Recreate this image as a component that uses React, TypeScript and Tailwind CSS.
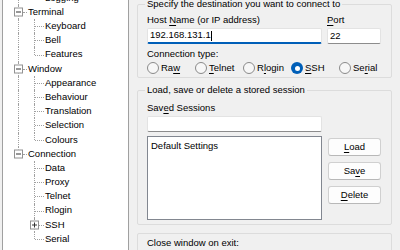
import React from 'react';

type TreeRow = {
  label: string;
  level: 0 | 1;
  box?: '-' | '+';
  last?: boolean;
  parentLast?: boolean;
};

const rows: TreeRow[] = [
  { label: 'Logging', level: 1, last: true },
  { label: 'Terminal', level: 0, box: '-' },
  { label: 'Keyboard', level: 1 },
  { label: 'Bell', level: 1 },
  { label: 'Features', level: 1, last: true },
  { label: 'Window', level: 0, box: '-' },
  { label: 'Appearance', level: 1 },
  { label: 'Behaviour', level: 1 },
  { label: 'Translation', level: 1 },
  { label: 'Selection', level: 1 },
  { label: 'Colours', level: 1, last: true },
  { label: 'Connection', level: 0, box: '-', last: true },
  { label: 'Data', level: 1, parentLast: true },
  { label: 'Proxy', level: 1, parentLast: true },
  { label: 'Telnet', level: 1, parentLast: true },
  { label: 'Rlogin', level: 1, parentLast: true },
  { label: 'SSH', level: 1, box: '+', parentLast: true },
  { label: 'Serial', level: 1, last: true, parentLast: true },
];

// text with one underlined access key, marked by '&'
const Accel = ({ text }: { text: string }) => {
  const i = text.indexOf('&');
  if (i < 0) return <>{text}</>;
  return (
    <>
      {text.slice(0, i)}
      <u className="underline-offset-[1.5px]">{text[i + 1]}</u>
      {text.slice(i + 2)}
    </>
  );
};

const ExpandBox = ({ sign, left }: { sign: '-' | '+'; left: string }) => (
  <span
    className={`absolute top-1/2 -translate-y-1/2 ${left} w-[9px] h-[9px] border border-[#929292] bg-white flex items-center justify-center`}
  >
    <span className="w-[5px] h-px bg-[#333]" />
    {sign === '+' && <span className="absolute w-px h-[5px] bg-[#333]" />}
  </span>
);

const Tree = () => (
  <div className="w-[127px] shrink-0 h-full bg-white border-l border-r border-[#a0a0a0] overflow-hidden">
    <div className="-mt-[9.3px]">
      {rows.map((r) => (
        <div
          key={r.label}
          className={`relative h-[14.2px] flex items-center whitespace-nowrap ${r.level === 0 ? 'pl-[25px]' : 'pl-[42px]'}`}
        >
          {/* top level trunk */}
          {(r.level === 1 ? !r.parentLast : true) && (
            <span
              className={`absolute left-[15px] top-0 border-l border-dotted border-[#a0a0a0] ${r.level === 0 && r.last ? 'h-1/2' : 'h-full'}`}
            />
          )}
          {r.level === 0 && (
            <>
              <span className="absolute left-[20px] top-1/2 w-[4px] border-t border-dotted border-[#a0a0a0]" />
              <ExpandBox sign={r.box ?? '-'} left="left-[11px]" />
            </>
          )}
          {r.level === 1 && (
            <>
              <span
                className={`absolute left-[31px] top-0 border-l border-dotted border-[#a0a0a0] ${r.last ? 'h-1/2' : 'h-full'}`}
              />
              <span className="absolute left-[32px] top-1/2 w-[9px] border-t border-dotted border-[#a0a0a0]" />
              {r.box && <ExpandBox sign={r.box} left="left-[27px]" />}
            </>
          )}
          <span className="relative">{r.label}</span>
        </div>
      ))}
    </div>
  </div>
);

const Radio = ({ label, checked }: { label: string; checked?: boolean }) => (
  <div className="w-[48px] flex items-center gap-[2px] shrink-0 whitespace-nowrap">
    {checked ? (
      <span className="w-[12px] h-[12px] shrink-0 rounded-full bg-[#005fb8] flex items-center justify-center">
        <span className="w-[5px] h-[5px] rounded-full bg-white" />
      </span>
    ) : (
      <span className="w-[12px] h-[12px] shrink-0 rounded-full border border-[#8a8a8a] bg-[#f7f7f7]" />
    )}
    <span className="leading-[12px]">
      <Accel text={label} />
    </span>
  </div>
);

const Button = ({ label }: { label: string }) => (
  <button className="w-[53px] h-[18px] rounded-[3px] border border-[#d0d0d0] border-b-[#b8b8b8] bg-[#fdfdfd] flex items-center justify-center leading-none">
    <Accel text={label} />
  </button>
);

export default function App() {
  return (
    <div className="w-[400px] h-[250px] overflow-hidden flex pl-[2px] bg-[#f0f0f0] text-black text-[9.5px] font-['Liberation_Sans',Arial,sans-serif]">
      <Tree />

      <div className="flex-1 min-w-0 flex flex-col px-[8px]">
        {/* destination */}
        <fieldset className="-mt-[1px] min-w-0 border border-[#dcdcdc] rounded-[2px] pl-[9px] pr-[9px] pt-[5px] pb-[3px]">
          <legend className="px-[2px] -ml-[2px] leading-[10px] whitespace-nowrap">Specify the destination you want to connect to</legend>
          <div className="flex gap-[5px]">
            <div className="w-[175px] shrink-0 flex flex-col">
              <div className="h-[12px] leading-[12px]">
                Host <Accel text="&Name (or IP address)" />
              </div>
              <div className="mt-[2px] h-[16px] bg-white border border-[#e3e3e3] border-b-2 border-b-[#005fb8] rounded-[2px] flex items-center pl-[2px]">
                192.168.131.1
                <span className="w-px h-[10px] bg-black" />
              </div>
            </div>
            <div className="w-[54px] shrink-0 flex flex-col">
              <div className="h-[12px] leading-[12px]">
                <Accel text="&Port" />
              </div>
              <div className="mt-[2px] h-[16px] bg-white border border-[#e3e3e3] border-b-[#8c8c8c] rounded-[2px] flex items-center pl-[2px]">
                22
              </div>
            </div>
          </div>
          <div className="mt-[4px] h-[12px] leading-[12px]">Connection type:</div>
          <div className="mt-[2px] flex">
            <Radio label="Ra&w" />
            <Radio label="&Telnet" />
            <Radio label="R&login" />
            <Radio label="&SSH" checked />
            <Radio label="Se&rial" />
          </div>
        </fieldset>

        {/* saved sessions */}
        <fieldset className="mt-[7px] min-w-0 border border-[#dcdcdc] rounded-[2px] pl-[9px] pr-[9px] pt-[7px] pb-[4px]">
          <legend className="px-[2px] -ml-[2px] leading-[10px] whitespace-nowrap">Load, save or delete a stored session</legend>
          <div className="h-[12px] leading-[12px]">
            <Accel text="Sav&ed Sessions" />
          </div>
          <div className="mt-[2px] w-[175px] h-[16px] bg-white border border-[#e3e3e3] border-b-[#8c8c8c] rounded-[2px]" />
          <div className="mt-[4px] flex gap-[6px]">
            <div className="w-[175px] shrink-0 h-[84px] bg-white border border-[#828790] pl-[3px] pt-[3px] leading-[12px]">
              Default Settings
            </div>
            <div className="pt-[2px] flex flex-col gap-[6px]">
              <Button label="&Load" />
              <Button label="Sa&ve" />
              <Button label="&Delete" />
            </div>
          </div>
        </fieldset>

        {/* close on exit */}
        <div className="mt-[8px] border border-[#dcdcdc] rounded-[2px] pl-[9px] pt-[3px] h-[40px] shrink-0">
          <div className="h-[12px] leading-[12px]">Close window on exit:</div>
        </div>
      </div>
    </div>
  );
}
